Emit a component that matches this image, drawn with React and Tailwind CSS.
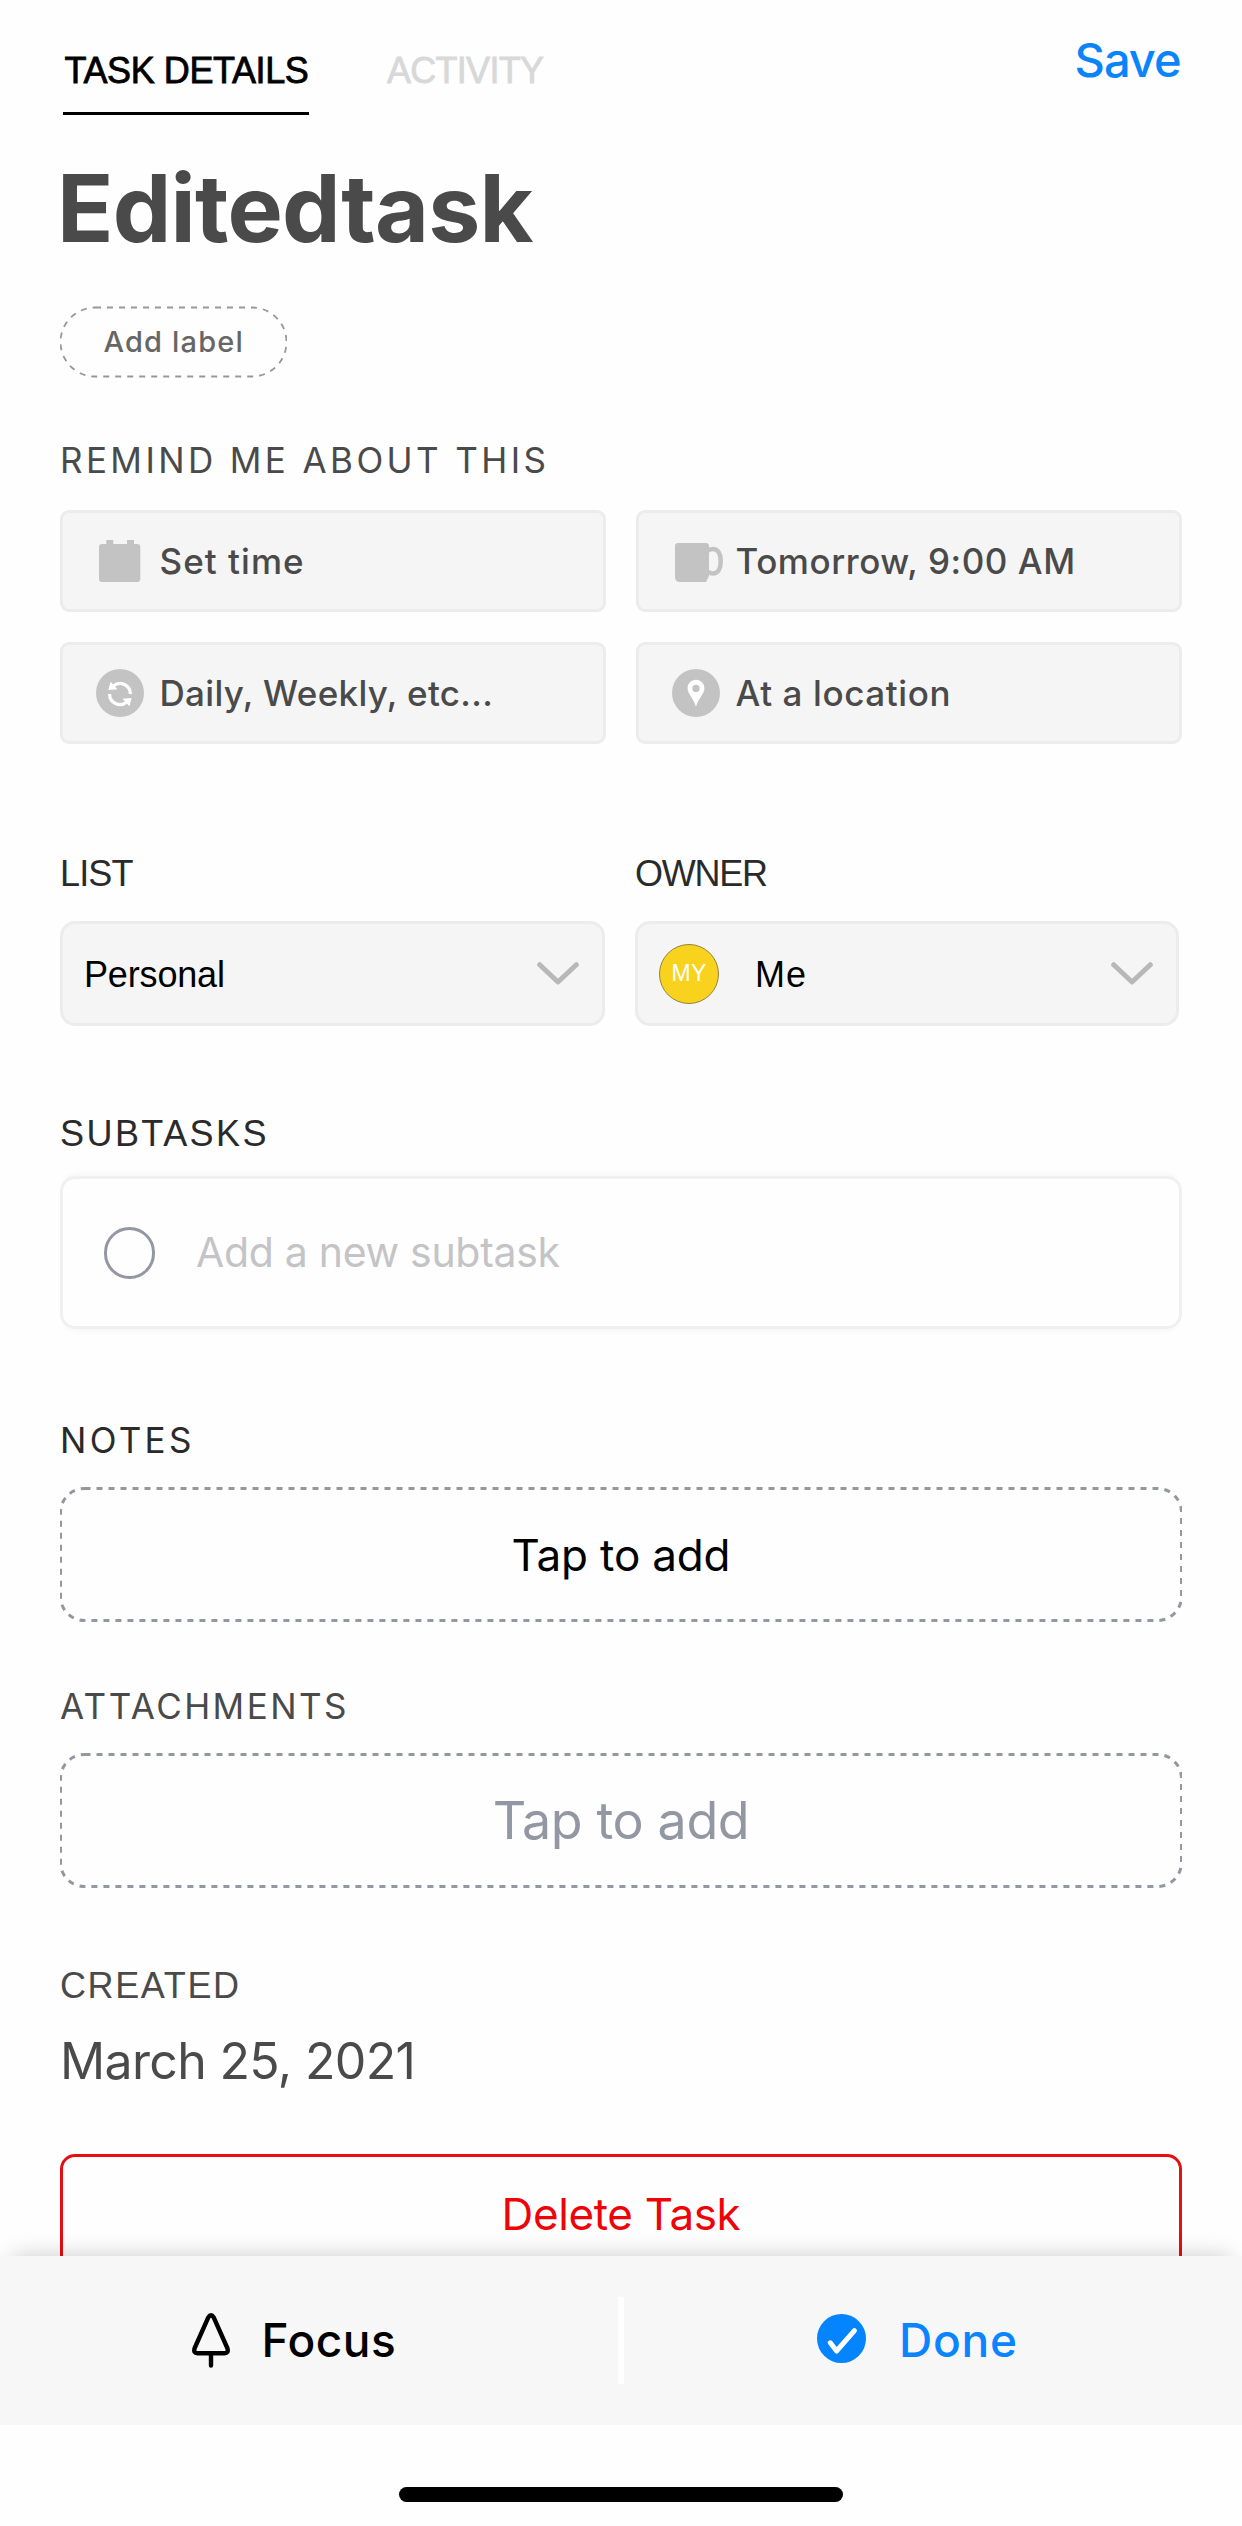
const Chevron = () => (
  <svg className="ml-auto mr-[23px] h-[23px] w-[42px] shrink-0" viewBox="0 0 42 23" fill="none">
    <path d="M2.7 2.7 21 20 39.3 2.7" stroke="#b8b8b8" strokeWidth="5" strokeLinecap="round" strokeLinejoin="round" />
  </svg>
);

const CalendarIcon = () => (
  <svg className="h-12 w-12" viewBox="0 0 48 48" fill="#c3c3c3">
    <rect x="3" y="7" width="41.3" height="38" rx="3" />
    <rect x="10.3" y="3" width="7" height="5" />
    <rect x="31" y="3" width="7" height="5" />
  </svg>
);

const MugIcon = () => (
  <svg className="h-12 w-12 overflow-visible" viewBox="0 0 48 48" fill="none">
    <path d="M6 6H34Q37 6 37 9V39L34 45H8Q3 45 3 40V9Q3 6 6 6Z" fill="#c3c3c3" />
    <path d="M36 13.5Q38.5 12 41 12C46 12 48.7 17 48.7 24.3S46 36.5 41 36.5Q38.5 36.5 36 35" stroke="#c3c3c3" strokeWidth="4.6" />
  </svg>
);

const RepeatIcon = () => (
  <svg className="h-12 w-12" viewBox="0 0 48 48" fill="none">
    <circle cx="24" cy="24" r="24" fill="#c3c3c3" />
    <path d="M34.4 25A10.4 10.4 0 0 0 17.5 16.8M13.6 25A10.4 10.4 0 0 0 30.5 33.2" stroke="#fff" strokeWidth="3.2" />
    <path d="M12.3 21 14.6 12.7 21.5 20.2ZM35.7 29 33.4 37.3 26.5 29.8Z" fill="#fff" />
  </svg>
);

const PinIcon = () => (
  <svg className="h-12 w-12" viewBox="0 0 48 48">
    <circle cx="24" cy="24" r="24" fill="#c3c3c3" />
    <path d="M24 10.8C28.8 10.8 32.4 14.4 32.4 19.2C32.4 24.5 26.5 29 24 37.7C21.5 29 15.6 24.5 15.6 19.2C15.6 14.4 19.2 10.8 24 10.8Z" fill="#fff" />
    <circle cx="24" cy="19.4" r="3.6" fill="#c3c3c3" />
  </svg>
);

const reminders = [
  { label: "Set time", Icon: CalendarIcon, tracking: "tracking-[1.04px]" },
  { label: "Tomorrow, 9:00 AM", Icon: MugIcon, tracking: "tracking-[0.55px]" },
  { label: "Daily, Weekly, etc...", Icon: RepeatIcon, tracking: "tracking-[0.33px]" },
  { label: "At a location", Icon: PinIcon, tracking: "tracking-[0.6px]" },
];

const DashedOutline = ({ width, height, radius, stroke }) => (
  <svg className="pointer-events-none absolute inset-0 h-full w-full" fill="none" aria-hidden="true">
    <rect x="0.5" y="1.5" width={width - 1} height={height - 3} rx={radius} stroke="#94979f" strokeWidth={stroke} strokeDasharray="6 6" />
  </svg>
);

const DashedButton = ({ children }) => (
  <button className="relative mt-[25px] flex h-[135px] w-full items-center justify-center">
    <DashedOutline width={1122} height={135} radius={24} stroke={3} />
    {children}
  </button>
);

export default function App() {
  return (
    <div className="h-[2526px] w-[1242px] overflow-hidden bg-[#fefefe] font-['Inter',sans-serif] text-[#4a4a4a]">
      <main className="flex h-[2256px] flex-col items-start overflow-hidden px-[60px] [&>*]:shrink-0">
        <header className="flex w-full items-start">
          <div className="ml-[3px] h-[115px] w-[246px] whitespace-nowrap border-b-[3px] border-black pl-[1.5px] pt-12 font-['Liberation_Sans',sans-serif] text-4xl leading-[45px] tracking-[-0.4px] text-black [-webkit-text-stroke:0.8px_black]">
            TASK DETAILS
          </div>
          <div className="ml-[78px] pt-12 font-['Liberation_Sans',sans-serif] text-4xl leading-[45px] tracking-[-0.72px] text-[#d8d8d8] [-webkit-text-stroke:0.8px_#d8d8d8]">
            ACTIVITY
          </div>
          <div className="ml-auto mt-[30px] w-[107.5px] whitespace-nowrap text-[47px] font-medium leading-[60px] tracking-[-0.98px] text-[#0a84fb]">
            Save
          </div>
        </header>

        <h1 className="-ml-[3px] mt-[39px] text-[93px] font-bold leading-[108px] tracking-[-0.77px]">Editedtask</h1>

        <button className="relative mt-11 flex h-[72px] w-[227px] items-center whitespace-nowrap pl-[43.5px] text-[29px] font-medium tracking-[1.17px] text-[#666]">
          <DashedOutline width={227} height={72} radius={34.5} stroke={1.8} />
          Add label
        </button>

        <h2 className="mt-[60px] text-[35px] leading-[44px] tracking-[3.4px]">REMIND ME ABOUT THIS</h2>
        <div className="mt-7 grid w-full grid-cols-2 gap-[30px]">
          {reminders.map(({ label, Icon, tracking }) => (
            <div key={label} className="flex h-[102px] items-center rounded-[9px] border-[3px] border-[#ececec] bg-[#f5f5f5] pl-[33px]">
              <Icon />
              <span className={`ml-[15.5px] text-[35px] font-medium ${tracking}`}>{label}</span>
            </div>
          ))}
        </div>

        <div className="mt-[107px] flex gap-[30px] font-['Liberation_Sans',sans-serif] text-4xl text-black">
          <div className="w-[545px]">
            <div className="leading-[45px] tracking-[-0.85px] text-[#2a2a2a]">LIST</div>
            <div className="mt-[25px] flex h-[105px] items-center rounded-[15px] border-[3px] border-[#ececec] bg-[#f5f5f5] pl-[21px]">
              <span className="pt-[2px] tracking-[-0.16px]">Personal</span>
              <Chevron />
            </div>
          </div>
          <div className="w-[544px]">
            <div className="leading-[45px] tracking-[-1.25px] text-[#2a2a2a]">OWNER</div>
            <div className="mt-[25px] flex h-[105px] items-center rounded-[15px] border-[3px] border-[#ececec] bg-[#f5f5f5] pl-[21px]">
              <span className="flex h-[60px] w-[60px] items-center justify-center rounded-full border border-[#948340] bg-[#f9d21e] text-[23px] tracking-[0.3px] text-white">
                MY
              </span>
              <span className="ml-9 pt-[2px] tracking-[1px]">Me</span>
              <Chevron />
            </div>
          </div>
        </div>

        <h2 className="mt-[86px] font-['Liberation_Sans',sans-serif] text-4xl leading-[44px] tracking-[2.45px] text-[#2a2a2a]">SUBTASKS</h2>
        <div className="mt-5 flex h-[153px] w-full items-center rounded-[15px] border-[3px] border-[#f0f0f0] pl-[41px] shadow-[0_6px_8px_-6px_rgba(0,0,0,0.06),0_-6px_8px_-6px_rgba(0,0,0,0.06)]">
          <span className="h-[52px] w-[51px] rounded-full border-[3px] border-[#9297a3]" />
          <span className="ml-[41px] text-[41px] tracking-[-0.3px] text-[#c4c4c6]">Add a new subtask</span>
        </div>

        <h2 className="mt-[89px] text-[35px] leading-[44px] tracking-[3.3px] text-[#2a2a2a]">NOTES</h2>
        <DashedButton>
          <span className="text-[44px] tracking-[-0.17px] text-black">Tap to add</span>
        </DashedButton>

        <h2 className="mt-[62px] text-[35px] leading-[44px] tracking-[2.45px]">ATTACHMENTS</h2>
        <DashedButton>
          <span className="text-[52px] tracking-[-0.4px] text-[#9297a3]">Tap to add</span>
        </DashedButton>

        <h2 className="mt-[76px] font-['Liberation_Sans',sans-serif] text-4xl leading-[44px] tracking-[1.61px]">CREATED</h2>
        <p className="mt-[23px] text-[50px] leading-[60px] tracking-[-0.65px]">March 25, 2021</p>

        <button className="mt-[63px] h-[150px] w-full rounded-[15px] border-[3px] border-[#e30f12] pb-[57px] pt-[27px] text-[44px] leading-[60px] tracking-[-0.38px] text-[#ee0408]">
          Delete Task
        </button>
      </main>

      <nav className="relative flex h-[169px] items-center bg-[#f7f7f7] text-[46px] font-medium shadow-[0_-12px_22px_-12px_rgba(0,0,0,0.2)]">
        <button className="flex w-[618px] items-center pl-48 text-black">
          <svg className="h-[55px] w-[38px]" viewBox="0 0 38 55" fill="none" stroke="currentColor" strokeWidth="4.4" strokeLinecap="round" strokeLinejoin="round">
            <path d="M16.3 4.4Q19 0 21.7 4.4L35.3 35Q37 40.2 32.5 40.2H5.5Q1 40.2 2.7 35ZM19 40.2V52.5" />
          </svg>
          <span className="ml-[31.5px] tracking-[0.51px]">Focus</span>
        </button>
        <span className="h-[87px] w-1.5 bg-[#fefefe]" />
        <button className="flex items-center pl-[193px] text-[#0a84ff]">
          <svg className="-mt-1 h-[49px] w-[49px]" viewBox="0 0 49 49" fill="none">
            <circle cx="24.5" cy="24.5" r="24.5" fill="#0484ff" />
            <path d="M13.3 28.8 19.6 37 37.4 16.6" stroke="#fff" strokeWidth="5" strokeLinecap="round" strokeLinejoin="round" />
          </svg>
          <span className="ml-[33px] tracking-[0.78px]">Done</span>
        </button>
      </nav>

      <div className="mx-auto mt-[62px] h-[15px] w-[444px] rounded-full bg-black" />
    </div>
  );
}
